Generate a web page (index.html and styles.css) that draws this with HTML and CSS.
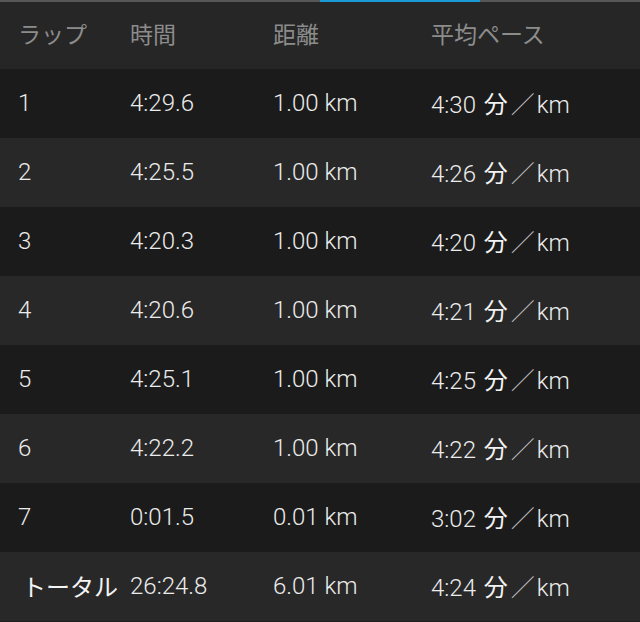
FILE: index.html
```html
<!DOCTYPE html>
<html lang="ja">
<head>
<meta charset="utf-8">
<link rel="stylesheet" href="styles.css">
</head>
<body>
<div class="tabbar"><div class="tab-indicator"></div></div>
<div class="table">
  <div class="row head">
    <div class="cell">ラップ</div>
    <div class="cell">時間</div>
    <div class="cell">距離</div>
    <div class="cell">平均ペース</div>
  </div>
  <div class="row dark">
    <div class="cell">1</div><div class="cell">4:29.6</div><div class="cell">1.00 km</div>
    <div class="cell">4:30 <span class="cjk">分</span><span class="slash">／</span>km</div>
  </div>
  <div class="row light">
    <div class="cell">2</div><div class="cell">4:25.5</div><div class="cell">1.00 km</div>
    <div class="cell">4:26 <span class="cjk">分</span><span class="slash">／</span>km</div>
  </div>
  <div class="row dark">
    <div class="cell">3</div><div class="cell">4:20.3</div><div class="cell">1.00 km</div>
    <div class="cell">4:20 <span class="cjk">分</span><span class="slash">／</span>km</div>
  </div>
  <div class="row light">
    <div class="cell">4</div><div class="cell">4:20.6</div><div class="cell">1.00 km</div>
    <div class="cell">4:21 <span class="cjk">分</span><span class="slash">／</span>km</div>
  </div>
  <div class="row dark">
    <div class="cell">5</div><div class="cell">4:25.1</div><div class="cell">1.00 km</div>
    <div class="cell">4:25 <span class="cjk">分</span><span class="slash">／</span>km</div>
  </div>
  <div class="row light">
    <div class="cell">6</div><div class="cell">4:22.2</div><div class="cell">1.00 km</div>
    <div class="cell">4:22 <span class="cjk">分</span><span class="slash">／</span>km</div>
  </div>
  <div class="row dark">
    <div class="cell">7</div><div class="cell">0:01.5</div><div class="cell">0.01 km</div>
    <div class="cell">3:02 <span class="cjk">分</span><span class="slash">／</span>km</div>
  </div>
  <div class="row light total">
    <div class="cell label">トータル</div><div class="cell">26:24.8</div><div class="cell">6.01 km</div>
    <div class="cell">4:24 <span class="cjk">分</span><span class="slash">／</span>km</div>
  </div>
</div>
</body>
</html>
```
FILE: styles.css
```css
html, body {
  margin: 0;
  padding: 0;
  background: #1f1f1f;
}
body {
  width: 640px;
  height: 622px;
  overflow: hidden;
  font-family: Roboto, "Noto Sans CJK JP", sans-serif;
  font-weight: 300;
  color: #ececec;
}
.tabbar {
  height: 2px;
  background: #575757;
  position: relative;
}
.tab-indicator {
  position: absolute;
  left: 320px;
  top: 0;
  width: 160px;
  height: 2px;
  background: #1a9bd7;
}
.row {
  display: grid;
  grid-template-columns: 112px 143px 158px 1fr;
  align-items: center;
  padding-left: 18px;
  height: 69px;
  font-size: 24px;
  line-height: 30px;
}
.row.head {
  height: 67px;
  background: #262626;
  color: #8c8c8c;
  font-family: "Noto Sans CJK JP", sans-serif;
  font-weight: 400;
  font-size: 23px;
}
.row.head .cell {
  padding-bottom: 6px;
}
.row.dark {
  background: #1b1b1b;
}
.row.light {
  background: #282828;
}
.cell {
  white-space: nowrap;
  height: 30px;
  padding-bottom: 2px;
}
.cjk {
  font-family: "Noto Sans CJK JP", sans-serif;
  font-weight: 400;
  color: #f2f2f2;
  margin-left: 2px;
}
.slash {
  display: inline-block;
  font-family: "Noto Sans CJK JP", sans-serif;
  font-weight: 300;
  color: #bdbdbd;
  margin: 0 2px 0 3px;
}
.label {
  font-family: "Noto Sans CJK JP", sans-serif;
  font-weight: 400;
  font-size: 24px;
  padding-left: 4px;
  color: #f4f4f4;
}
```
